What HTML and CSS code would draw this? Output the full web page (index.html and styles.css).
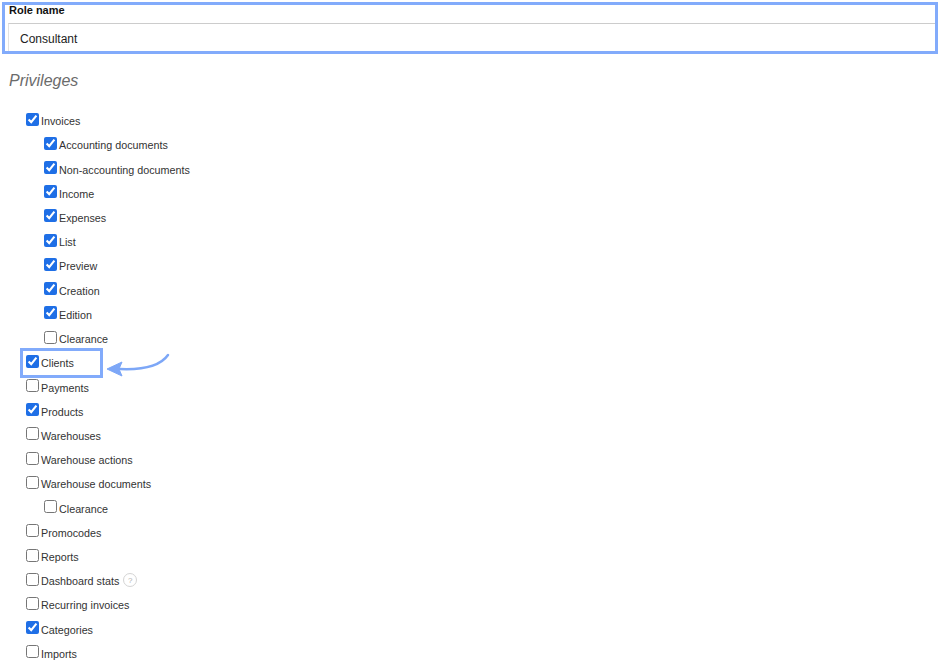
FILE: index.html
```html
<!DOCTYPE html>
<html>
<head>
<meta charset="utf-8">
<link rel="stylesheet" href="styles.css">
</head>
<body>
<div class="role-box">
  <div class="role-label">Role name</div>
  <div class="role-input">Consultant</div>
</div>
<h2 class="section-title">Privileges</h2>
<ul class="privs">
  <li><label><input type="checkbox" checked>Invoices</label></li>
  <li class="sub"><label><input type="checkbox" checked>Accounting documents</label></li>
  <li class="sub"><label><input type="checkbox" checked>Non-accounting documents</label></li>
  <li class="sub"><label><input type="checkbox" checked>Income</label></li>
  <li class="sub"><label><input type="checkbox" checked>Expenses</label></li>
  <li class="sub"><label><input type="checkbox" checked>List</label></li>
  <li class="sub"><label><input type="checkbox" checked>Preview</label></li>
  <li class="sub"><label><input type="checkbox" checked>Creation</label></li>
  <li class="sub"><label><input type="checkbox" checked>Edition</label></li>
  <li class="sub"><label><input type="checkbox">Clearance</label></li>
  <li class="highlighted"><label><input type="checkbox" checked>Clients</label>
    <span class="hl-box"></span>
    <svg class="hl-arrow" width="70" height="34" viewBox="0 0 70 34">
      <path d="M64 10 C 57 20, 40 25, 16 24" fill="none" stroke="#7da7f7" stroke-width="2.5" stroke-linecap="round"/>
      <path d="M3 24 L18 17 L15 24 L18 31 Z" fill="#7da7f7" stroke="#7da7f7" stroke-width="1" stroke-linejoin="round"/>
    </svg>
  </li>
  <li><label><input type="checkbox">Payments</label></li>
  <li><label><input type="checkbox" checked>Products</label></li>
  <li><label><input type="checkbox">Warehouses</label></li>
  <li><label><input type="checkbox">Warehouse actions</label></li>
  <li><label><input type="checkbox">Warehouse documents</label></li>
  <li class="sub"><label><input type="checkbox">Clearance</label></li>
  <li><label><input type="checkbox">Promocodes</label></li>
  <li><label><input type="checkbox">Reports</label></li>
  <li><label><input type="checkbox">Dashboard stats</label><span class="help">?</span></li>
  <li><label><input type="checkbox">Recurring invoices</label></li>
  <li><label><input type="checkbox" checked>Categories</label></li>
  <li><label><input type="checkbox">Imports</label></li>
</ul>
</body>
</html>
```
FILE: styles.css
```css
html, body {
  margin: 0;
  padding: 0;
  background: #ffffff;
  font-family: "Liberation Sans", Arial, sans-serif;
  color: #333333;
}

.role-box {
  margin: 2px 12px 0 2px;
  border: 3px solid #82abfb;
  box-sizing: border-box;
  width: 936px;
}

.role-label {
  height: 18px;
  padding: 0 0 0 4px;
  box-sizing: border-box;
  font-size: 11px;
  font-weight: bold;
  color: #111111;
  line-height: 11px;
}

.role-input {
  margin-left: 3px;
  height: 28px;
  box-sizing: border-box;
  border-top: 1px solid #cccccc;
  border-left: 1px solid #e2e2e2;
  padding-left: 11px;
  font-size: 12px;
  line-height: 30px;
  color: #222222;
}

.section-title {
  margin: 16px 0 0 9px;
  font-size: 16px;
  font-weight: normal;
  font-style: italic;
  color: #6b6b6b;
  line-height: 22px;
}

.privs {
  list-style: none;
  margin: 17px 0 0 0;
  padding: 0;
}

.privs li {
  position: relative;
  height: 24.23px;
  padding-left: 22px;
  display: flex;
  align-items: center;
  font-size: 10.75px;
}

.privs li.sub {
  padding-left: 40px;
}

.privs label {
  display: flex;
  align-items: center;
  color: #333333;
}

.privs input {
  width: 13px;
  height: 13px;
  margin: 0 2px 0 4px;
  accent-color: #1f6fe6;
  position: relative;
  top: -2px;
}

.hl-box {
  position: absolute;
  left: 20px;
  top: -3px;
  width: 83px;
  height: 30px;
  box-sizing: border-box;
  border: 3px solid #82abfb;
}

.hl-arrow {
  position: absolute;
  left: 104px;
  top: -6px;
}

.help {
  display: inline-flex;
  align-items: center;
  justify-content: center;
  width: 12px;
  height: 12px;
  margin-left: 4px;
  border: 1px solid #d4d4d4;
  border-radius: 50%;
  font-size: 8px;
  color: #b0b0b0;
  position: relative;
  top: -1px;
}
```
